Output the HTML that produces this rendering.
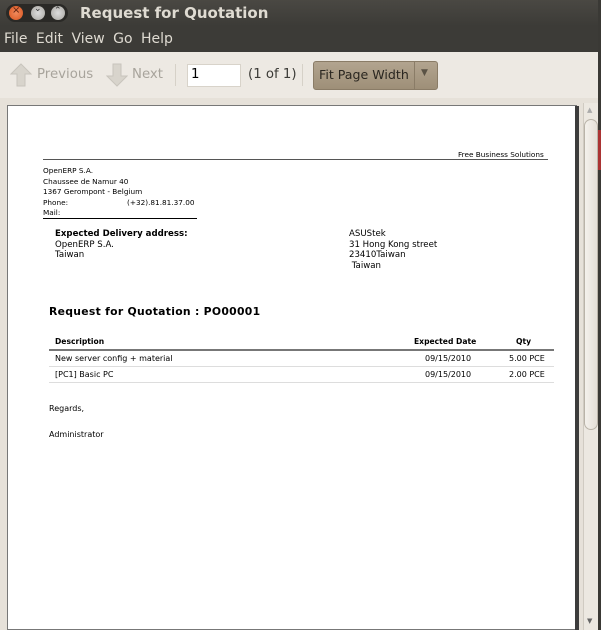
<!DOCTYPE html>
<html><head><style>
*{margin:0;padding:0;box-sizing:border-box}
body{width:601px;height:630px;overflow:hidden;background:#3a3935;font-family:"DejaVu Sans","Liberation Sans",sans-serif;position:relative}
.abs{position:absolute;white-space:nowrap}
#title{left:0;top:0;width:601px;height:26px;background:linear-gradient(#4a4843,#3c3b37)}
#menu{left:0;top:26px;width:601px;height:26px;background:#3c3b37}
#tool{left:0;top:52px;width:598px;height:46px;background:#ede9e3}
#view{left:0;top:98px;width:598px;height:532px;background:#e6e1d9}
.btn{width:14px;height:14px;border-radius:50%;top:6px}
.pg{color:#000;font-size:7.6px}
</style></head><body>
<div class="abs" id="title"></div>
<div class="abs" style="left:6px;top:4px;width:62px;height:18px;border-radius:9px;background:#2a2926"></div>
<div class="abs btn" style="left:9px;background:radial-gradient(#f08a5d,#d9541e)"></div>
<div class="abs btn" style="left:31px;background:radial-gradient(#ddd,#a8a6a0)"></div>
<div class="abs btn" style="left:51px;background:radial-gradient(#ddd,#a8a6a0)"></div>
<div class="abs" style="left:12px;top:5px;font-size:10px;color:#5a2010">×</div>
<div class="abs" style="left:34px;top:4px;font-size:9px;color:#333">⌄</div>
<div class="abs" style="left:54px;top:6px;font-size:9px;color:#333">⌃</div>
<div class="abs" style="left:80px;top:4px;font-size:15px;font-weight:bold;color:#dfdbd2">Request for Quotation</div>
<div class="abs" id="menu"></div>
<div class="abs" style="left:4px;top:31px;font-size:14px;color:#dfdbd2;word-spacing:4px">File Edit View Go Help</div>
<div class="abs" id="tool"></div>
<svg class="abs" style="left:10px;top:63px" width="22" height="24"><path d="M11 1 L21 11 H15 V23 H7 V11 H1 Z" fill="#d8d4cc" stroke="#c8c4bc"/></svg>
<div class="abs" style="left:37px;top:67px;font-size:13.3px;color:#a8a49c">Previous</div>
<svg class="abs" style="left:106px;top:63px" width="22" height="24"><path d="M7 1 H15 V13 H21 L11 23 L1 13 H7 Z" fill="#d8d4cc" stroke="#c8c4bc"/></svg>
<div class="abs" style="left:132px;top:67px;font-size:13.3px;color:#a8a49c">Next</div>
<div class="abs" style="left:175px;top:64px;width:1px;height:22px;background:#d6d1c8"></div>
<div class="abs" style="left:187px;top:64px;width:54px;height:23px;background:#fff;border:1px solid #d8d3ca"></div>
<div class="abs" style="left:191px;top:67px;font-size:13.3px;color:#000">1</div>
<div class="abs" style="left:248px;top:67px;font-size:13.3px;color:#3c3b37">(1 of 1)</div>
<div class="abs" style="left:302px;top:64px;width:1px;height:22px;background:#d6d1c8"></div>
<div class="abs" style="left:313px;top:61px;width:125px;height:29px;border-radius:3px;background:linear-gradient(#b2a48f,#9e8f78);border:1px solid #8a7c67"></div>
<div class="abs" style="left:414px;top:62px;width:1px;height:27px;background:#8a7c67"></div>
<div class="abs" style="left:319px;top:67px;font-size:12.6px;color:#2a2620">Fit Page Width</div>
<div class="abs" style="left:421px;top:68px;font-size:9px;color:#5a5245">▼</div>
<div class="abs" id="view"></div>
<div class="abs" style="left:7px;top:105px;width:570px;height:525px;background:#fff;border:1px solid #777"></div>
<div class="abs" style="left:575px;top:106px;width:4px;height:524px;background:#3c3c3c"></div>
<div class="abs" style="left:583px;top:103px;width:15px;height:527px;background:#ece8e1;border-left:1px solid #d0cbc2"></div>
<div class="abs" style="left:584px;top:119px;width:14px;height:311px;border-radius:7px;background:linear-gradient(90deg,#f4f1ec,#e4dfd7);border:1px solid #b9b3a8"></div>
<div class="abs" style="left:587px;top:106px;font-size:7px;color:#aaa">▲</div>
<div class="abs" style="left:587px;top:617px;font-size:7px;color:#666">▼</div>
<div class="abs" style="left:598px;top:0;width:3px;height:630px;background:#3a3935"></div>
<div class="abs" style="left:598px;top:130px;width:3px;height:40px;background:#a33"></div>

<div class="abs pg" style="left:458px;top:150px;font-size:7.3px">Free Business Solutions</div>
<div class="abs" style="left:43px;top:159px;width:505px;height:1px;background:#555"></div>
<div class="abs pg" style="left:43px;top:166px;line-height:10.5px;font-size:7.3px">OpenERP S.A.<br>Chaussee de Namur 40<br>1367 Gerompont - Belgium<br>Phone:<br>Mail:</div>
<div class="abs pg" style="left:127px;top:197.5px;font-size:7.3px">(+32).81.81.37.00</div>
<div class="abs" style="left:43px;top:218px;width:154px;height:1px;background:#000"></div>
<div class="abs pg" style="left:55px;top:229px;font-size:8.6px;line-height:10.5px"><b>Expected Delivery address:</b><br>OpenERP S.A.<br>Taiwan</div>
<div class="abs pg" style="left:349px;top:229px;font-size:8.6px;line-height:10.5px">ASUStek<br>31 Hong Kong street<br>23410Taiwan<br>&nbsp;Taiwan</div>
<div class="abs pg" style="left:49px;top:305px;font-size:10.8px;font-weight:bold;letter-spacing:0.3px">Request for Quotation : PO00001</div>
<div class="abs pg" style="left:55px;top:337px;font-weight:bold">Description</div>
<div class="abs pg" style="left:414px;top:337px;font-weight:bold">Expected Date</div>
<div class="abs pg" style="left:516px;top:337px;font-weight:bold">Qty</div>
<div class="abs" style="left:49px;top:349px;width:505px;height:2px;background:#777"></div>
<div class="abs pg" style="left:55px;top:354px;font-size:8px">New server config + material</div>
<div class="abs pg" style="left:425px;top:354px;font-size:8px">09/15/2010</div>
<div class="abs pg" style="left:509px;top:354px;font-size:8px">5.00 PCE</div>
<div class="abs" style="left:49px;top:366px;width:505px;height:1px;background:#ddd"></div>
<div class="abs pg" style="left:55px;top:370px;font-size:8px">[PC1] Basic PC</div>
<div class="abs pg" style="left:425px;top:370px;font-size:8px">09/15/2010</div>
<div class="abs pg" style="left:509px;top:370px;font-size:8px">2.00 PCE</div>
<div class="abs" style="left:49px;top:382px;width:505px;height:1px;background:#ddd"></div>
<div class="abs pg" style="left:49px;top:404px;font-size:8px">Regards,</div>
<div class="abs pg" style="left:49px;top:430px;font-size:8px">Administrator</div>
</body></html>
